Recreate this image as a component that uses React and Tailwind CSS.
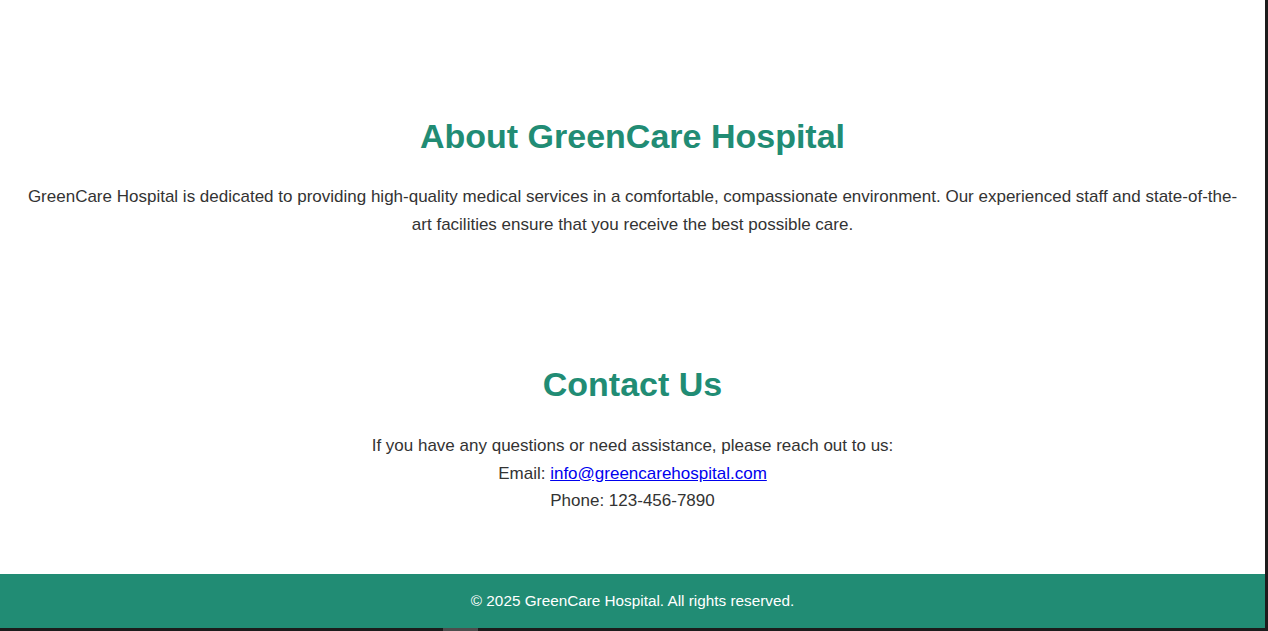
import React from "react";

const App = () => {
  return (
    <div className="flex h-[631px] w-full bg-[#1c1c1c] font-['Liberation_Sans',Arial,sans-serif]">
      <div className="flex flex-1 flex-col">
        <div className="flex flex-1 flex-col bg-white text-[#333]">
          {/* About Section */}
          <section className="px-5 pt-[116px] text-center">
            <h2 className="text-[34px] font-bold leading-[40px] text-[#218c74]">
              About GreenCare Hospital
            </h2>
            <p className="mt-[27px] text-[17px] leading-[1.62]">
              GreenCare Hospital is dedicated to providing high-quality medical services in a comfortable,
              compassionate environment. Our experienced staff and state-of-the-art facilities ensure that you
              receive the best possible care.
            </p>
          </section>

          {/* Contact Section */}
          <section className="px-5 pt-[126px] text-center">
            <h2 className="text-[34px] font-bold leading-[40px] text-[#218c74]">Contact Us</h2>
            <p className="mt-[28px] text-[17px] leading-[1.62]">
              If you have any questions or need assistance, please reach out to us:
              <br />
              Email:{" "}
              <a href="mailto:info@greencarehospital.com" className="text-[#0000ee] underline">
                info@greencarehospital.com
              </a>
              <br />
              Phone: 123-456-7890
            </p>
          </section>

          {/* Footer */}
          <footer className="mt-auto flex h-[54px] items-center justify-center bg-[#218c74] text-[15.3px] text-white">
            <p className="pt-[1px]">© 2025 GreenCare Hospital. All rights reserved.</p>
          </footer>
        </div>
        <div className="flex h-[3px]">
          <div className="ml-[443px] w-[35px] bg-[#4d4d4d]"></div>
        </div>
      </div>
      <div className="w-[3px]"></div>
    </div>
  );
};

export default App;
